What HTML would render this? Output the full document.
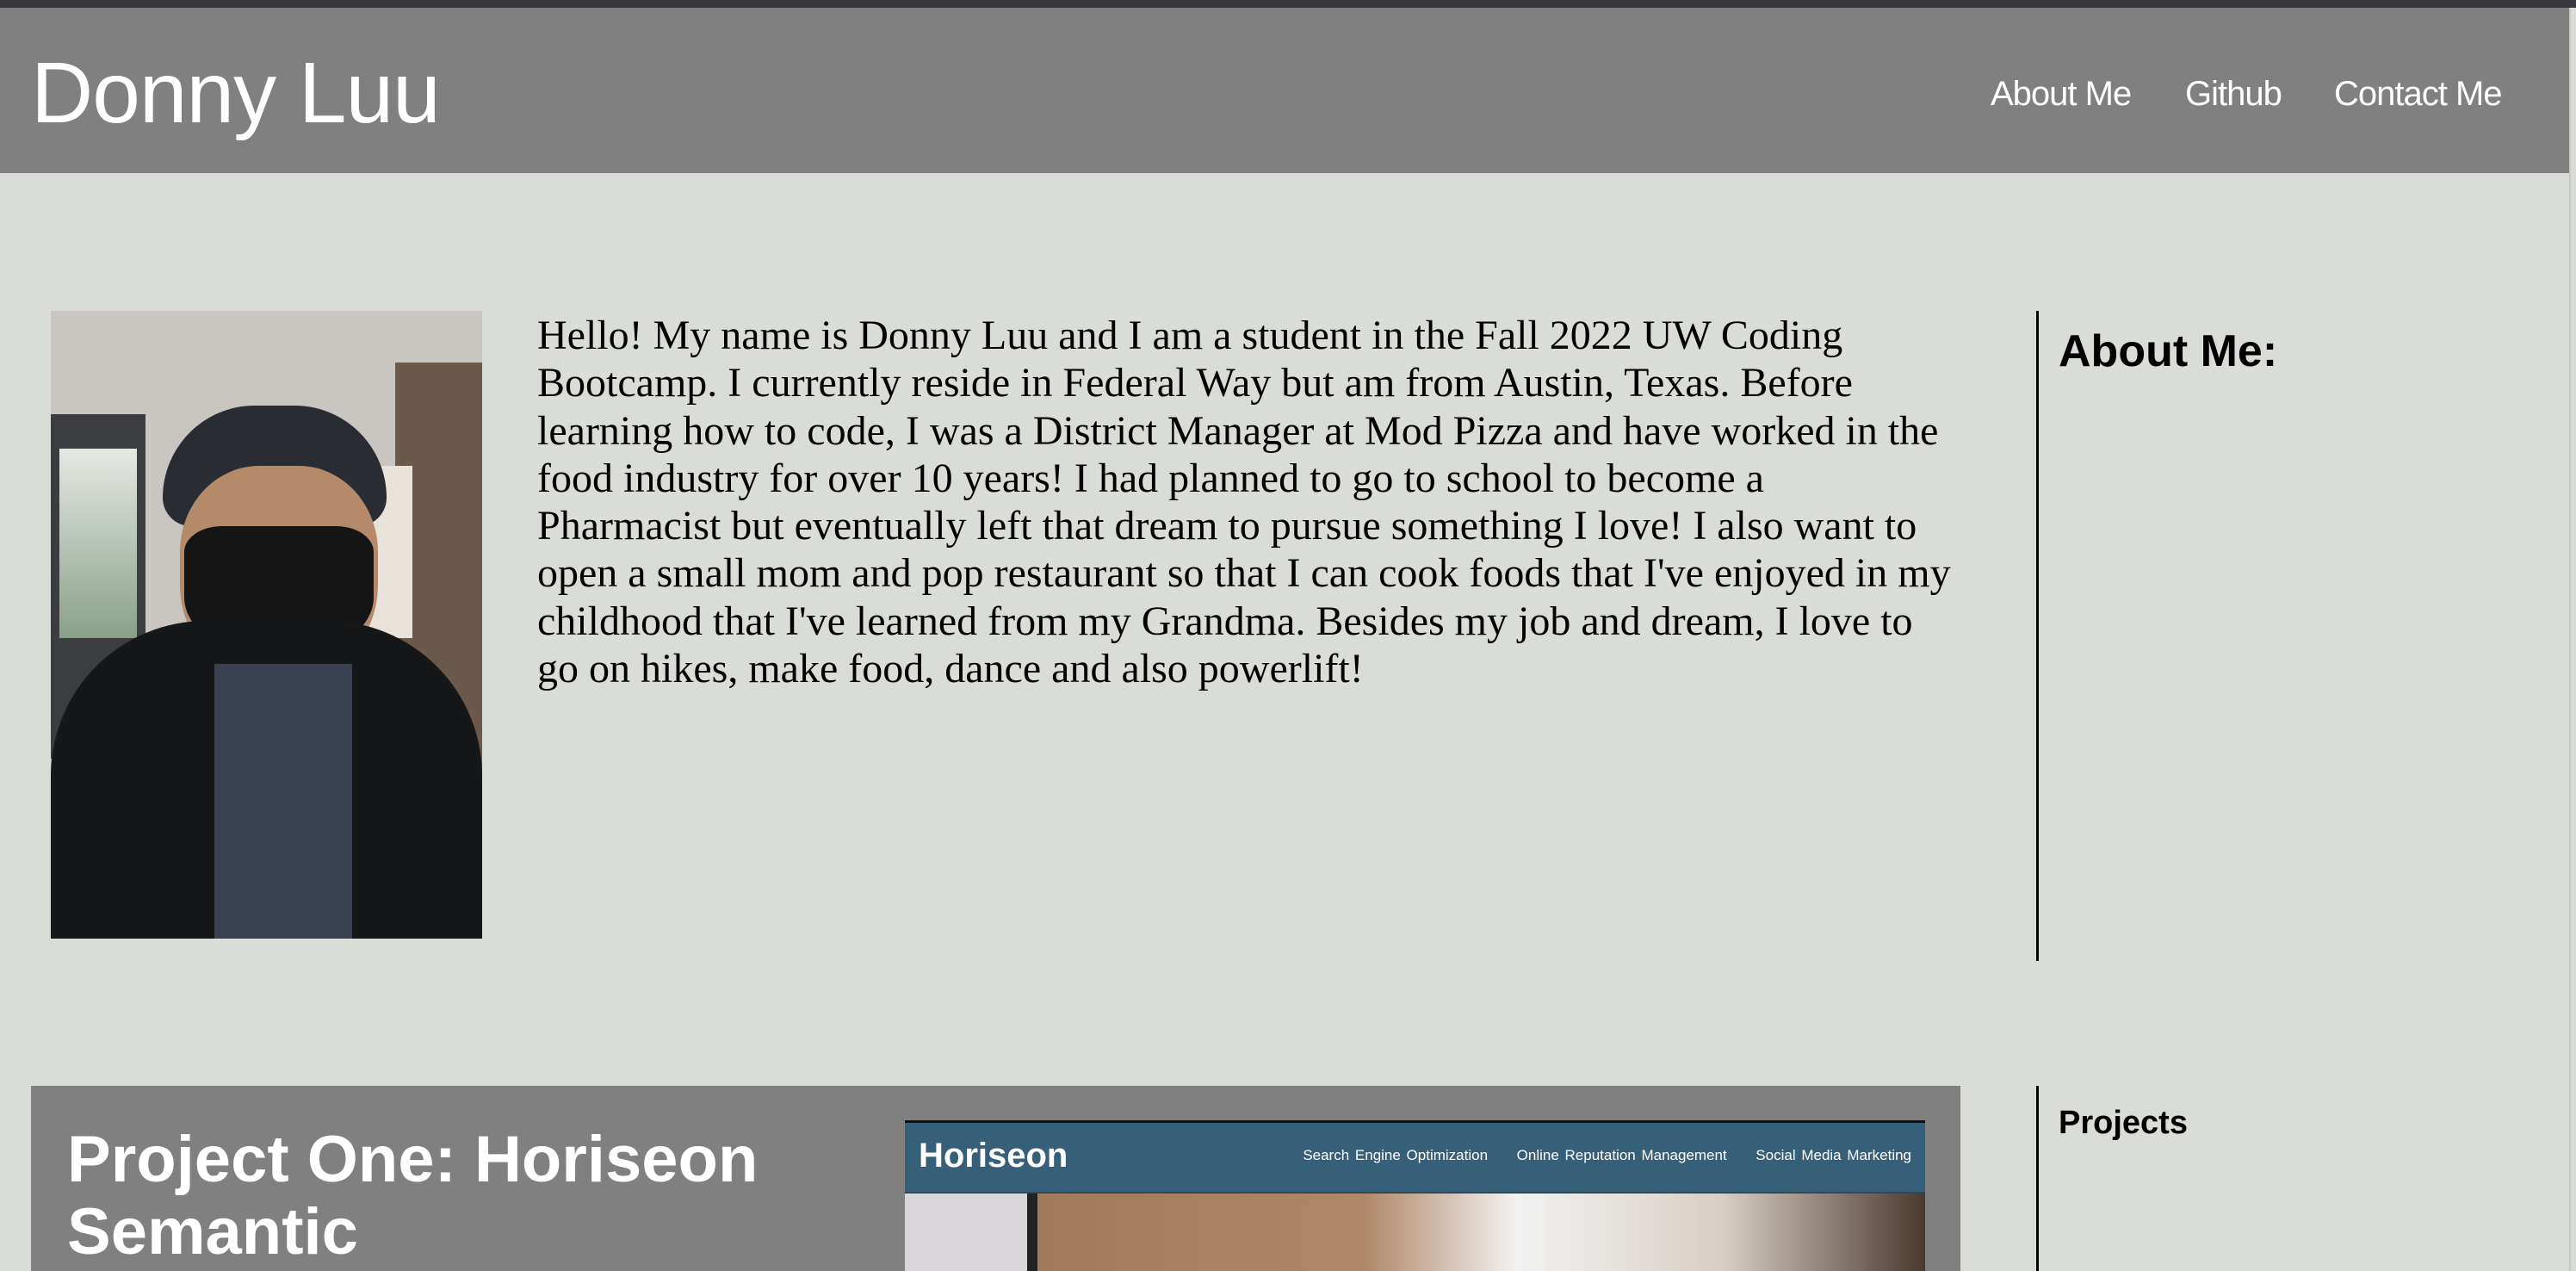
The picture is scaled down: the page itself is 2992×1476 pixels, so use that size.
<!DOCTYPE html>
<html><head><meta charset="utf-8"><style>
*{margin:0;padding:0;box-sizing:border-box}
body{width:2992px;height:1476px;overflow:hidden;background:#dadcd7;position:relative;font-family:"Liberation Sans",sans-serif}
.top{position:absolute;left:0;top:0;width:2992px;height:9px;background:#37383c}
.hdr{position:absolute;left:0;top:9px;width:2984px;height:192px;background:#808080}
.title{position:absolute;left:36px;top:42px;color:#fff;font-size:100px;font-weight:500;letter-spacing:-1px}
.nav{position:absolute;top:78px;color:#fff;font-size:40px;letter-spacing:-1px}
.txt{position:absolute;left:624px;top:362px;white-space:nowrap;font-family:"Liberation Serif",serif;font-size:48px;line-height:55.3px;color:#000}
.vl{position:absolute;left:2365px;width:3px;background:#000}
.side{position:absolute;left:2391px;font-weight:bold;color:#000}
</style></head><body>
<div class="top"></div>
<div class="hdr">
<div class="title">Donny Luu</div>
<div class="nav" style="left:2312px">About Me</div>
<div class="nav" style="left:2538px">Github</div>
<div class="nav" style="left:2711px">Contact Me</div>
</div>
<div style="position:absolute;left:59px;top:361px;width:501px;height:729px;overflow:hidden;background:#c9c5c0">
 <div style="position:absolute;left:0;top:120px;width:110px;height:400px;background:#3c3d40"></div>
 <div style="position:absolute;left:10px;top:160px;width:90px;height:220px;background:linear-gradient(#e6e8e4,#8aa08a)"></div>
 <div style="position:absolute;left:400px;top:60px;width:101px;height:500px;background:#6b5a4a"></div>
 <div style="position:absolute;left:360px;top:180px;width:60px;height:200px;background:#e8e2da"></div>
 <div style="position:absolute;left:130px;top:110px;width:260px;height:140px;border-radius:130px 130px 40px 40px;background:#2a2c33"></div>
 <div style="position:absolute;left:150px;top:180px;width:230px;height:250px;border-radius:40% 40% 45% 45%;background:#b58a6a"></div>
 <div style="position:absolute;left:155px;top:250px;width:220px;height:150px;border-radius:20% 20% 45% 45%;background:#151515"></div>
 <div style="position:absolute;left:0;top:360px;width:501px;height:369px;border-radius:180px 180px 0 0;background:#161719"></div>
 <div style="position:absolute;left:190px;top:410px;width:160px;height:319px;background:#3a4150"></div>
</div>
<div class="txt">Hello! My name is Donny Luu and I am a student in the Fall 2022 UW Coding<br>Bootcamp. I currently reside in Federal Way but am from Austin, Texas. Before<br>learning how to code, I was a District Manager at Mod Pizza and have worked in the<br>food industry for over 10 years! I had planned to go to school to become a<br>Pharmacist but eventually left that dream to pursue something I love! I also want to<br>open a small mom and pop restaurant so that I can cook foods that I've enjoyed in my<br>childhood that I've learned from my Grandma. Besides my job and dream, I love to<br>go on hikes, make food, dance and also powerlift!</div>
<div class="vl" style="top:361px;height:755px"></div>
<div class="side" style="top:378px;font-size:52px">About Me:</div>
<div style="position:absolute;left:36px;top:1261px;width:2241px;height:215px;background:#808080">
 <div style="position:absolute;left:42px;top:44px;color:#fff;font-weight:bold;font-size:76px;line-height:84px">Project One: Horiseon<br>Semantic</div>
 <div style="position:absolute;left:1015px;top:40px;width:1185px;height:175px;border-top:3px solid #111;background:linear-gradient(90deg,#d8d6d8 0,#d8d6d8 12%,#222 12%,#222 13%,#a07a5a 13%,#b08868 45%,#f2f2f2 60%,#d8cfc6 80%,#4a3a30 100%)">
  <div style="position:absolute;left:0;top:0;width:100%;height:82px;background:#365f7a;border-bottom:2px solid #2a4a60">
   <div style="position:absolute;left:16px;top:16px;color:#fff;font-size:40px;font-weight:bold">Horiseon</div>
   <div style="position:absolute;right:16px;top:28px;color:#fff;font-size:17px;word-spacing:2px">Search Engine Optimization &nbsp;&nbsp;&nbsp; Online Reputation Management &nbsp;&nbsp;&nbsp; Social Media Marketing</div>
  </div>
 </div>
</div>
<div class="vl" style="top:1261px;height:215px"></div>
<div class="side" style="top:1283px;font-size:38px">Projects</div>
<div style="position:absolute;left:2984px;top:9px;width:2px;height:1467px;background:#c8cac6"></div>
</body></html>
